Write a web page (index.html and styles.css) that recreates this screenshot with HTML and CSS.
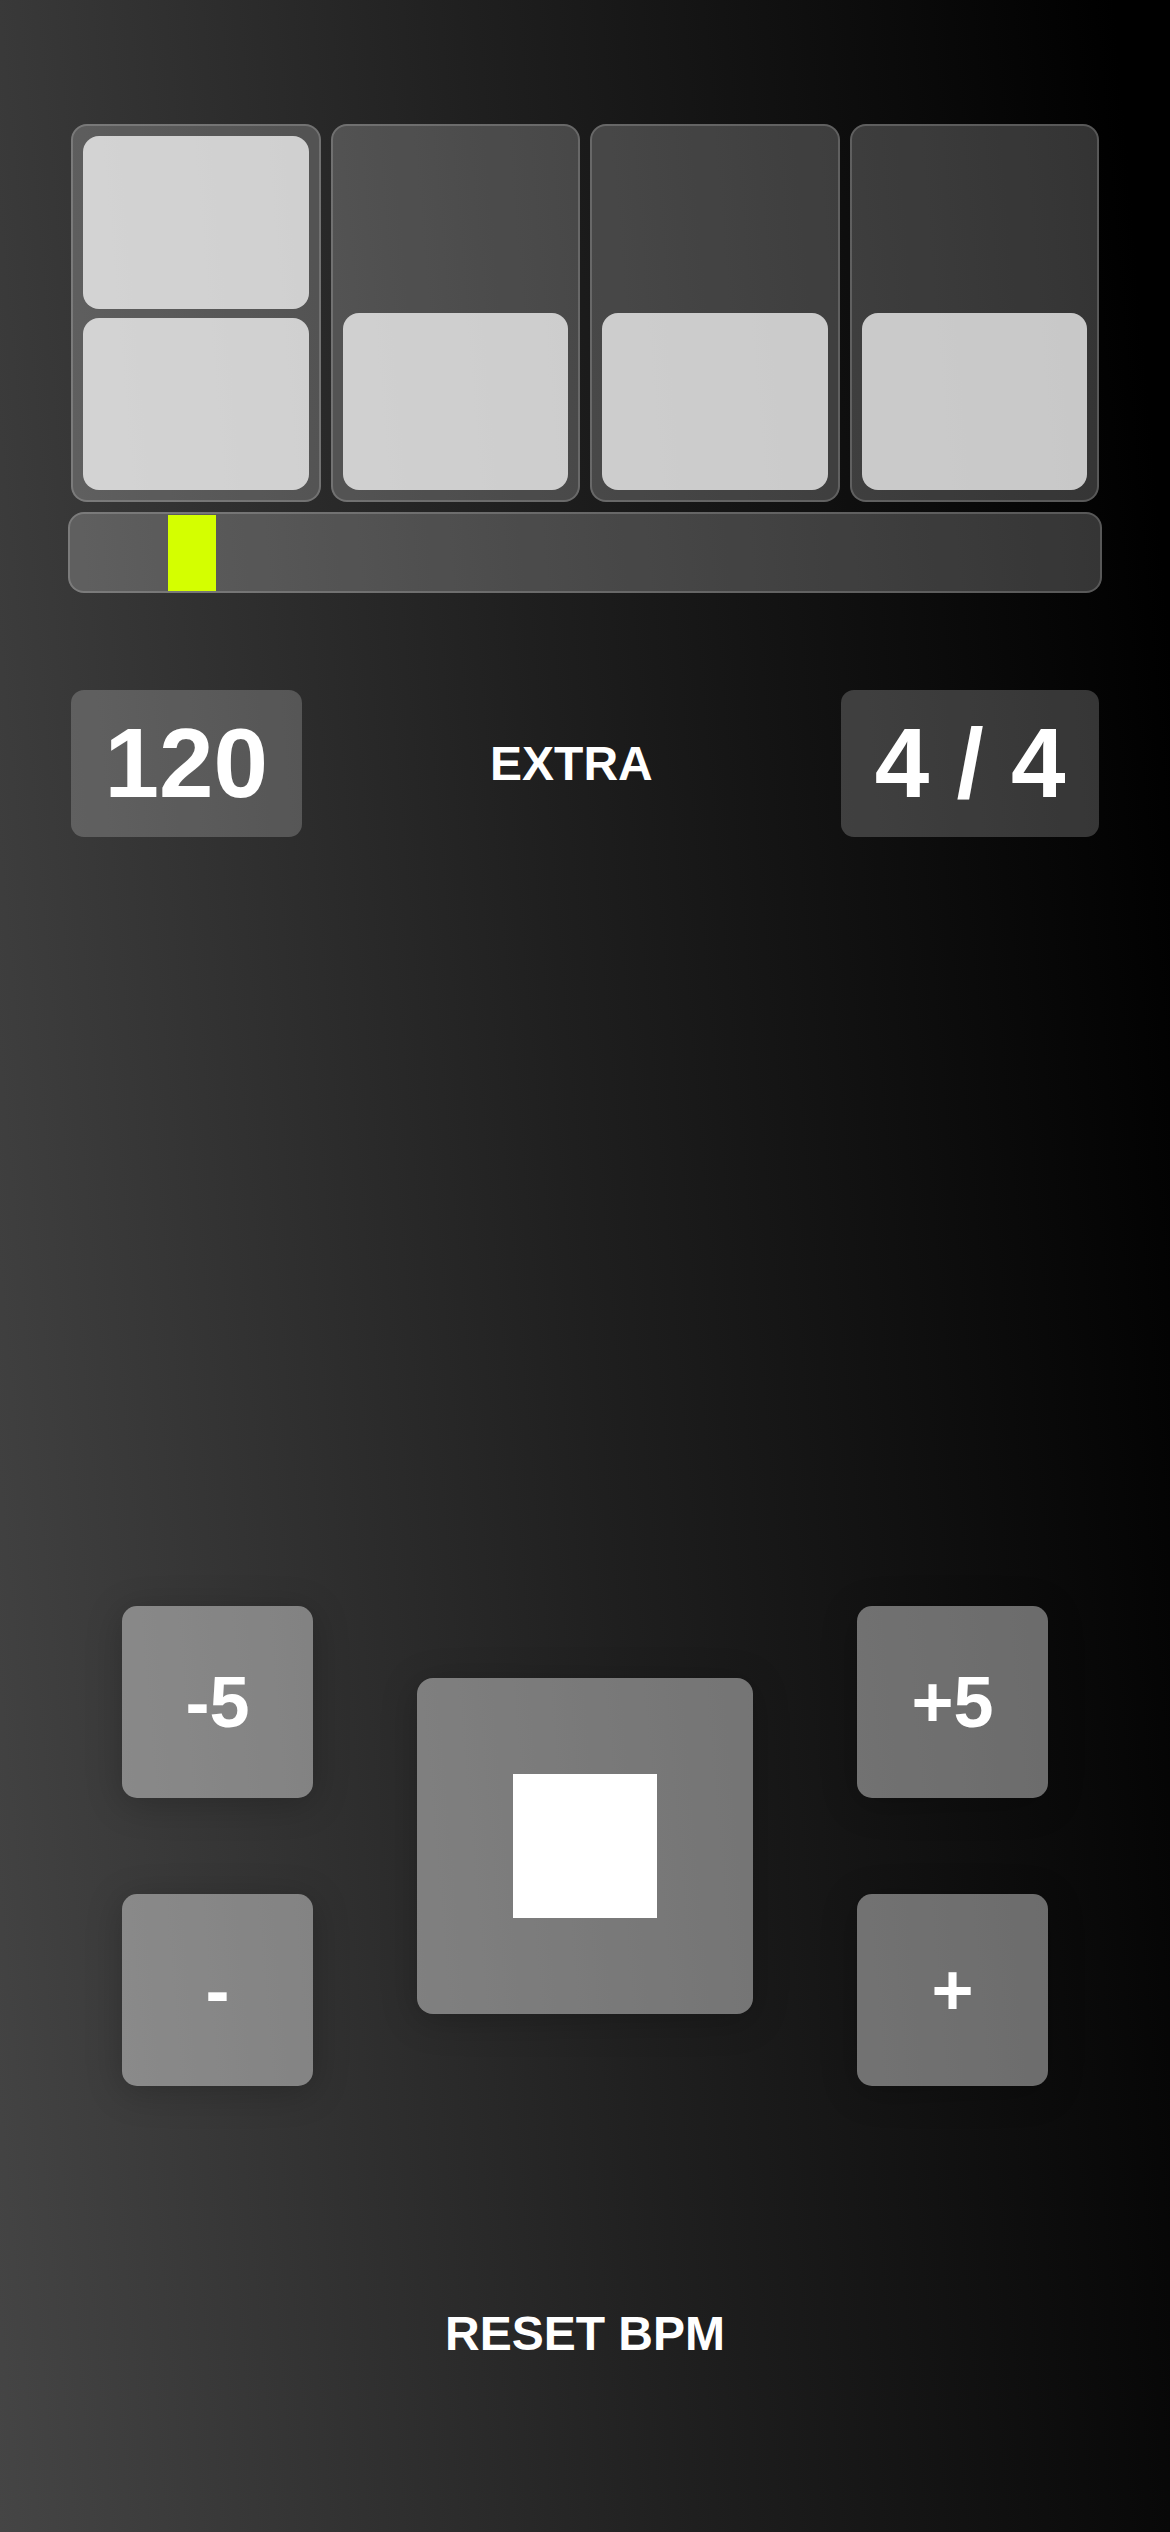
FILE: index.html
```html
<!DOCTYPE html>
<html lang="en">
<head>
<meta charset="utf-8">
<title>Metronome</title>
<link rel="stylesheet" href="styles.css">
</head>
<body>
<main class="app">
  <section class="beats">
    <div class="beat">
      <div class="sub"></div>
      <div class="sub"></div>
    </div>
    <div class="beat">
      <div class="sub"></div>
    </div>
    <div class="beat">
      <div class="sub"></div>
    </div>
    <div class="beat">
      <div class="sub"></div>
    </div>
  </section>
  <div class="track">
    <div class="playhead" style="left: 9.5%;"></div>
  </div>
  <section class="info">
    <div class="readout">120</div>
    <div class="mode">EXTRA</div>
    <div class="readout">4 / 4</div>
  </section>
  <section class="controls">
    <div class="col">
      <button class="btn">-5</button>
      <button class="btn">-</button>
    </div>
    <button class="play"><span class="stop"></span></button>
    <div class="col">
      <button class="btn">+5</button>
      <button class="btn">+</button>
    </div>
  </section>
  <div class="reset">RESET BPM</div>
</main>
</body>
</html>
```
FILE: styles.css
```css
* { box-sizing: border-box; }
html, body {
  margin: 0;
  padding: 0;
}
body {
  width: 1170px;
  height: 2532px;
  overflow: hidden;
  background: linear-gradient(85deg, #454545 0%, #1f1f1f 50%, #000 96%);
  font-family: "Liberation Sans", Arial, sans-serif;
  font-weight: 700;
  color: #fff;
}
.app {
  display: flex;
  flex-direction: column;
  padding: 124px 71px 0;
}
.beats {
  display: flex;
  gap: 10px;
  height: 378px;
}
.beat {
  flex: 1 1 0;
  display: flex;
  flex-direction: column;
  justify-content: flex-end;
  gap: 9px;
  padding: 10px;
  border: 2px solid rgba(255, 255, 255, 0.18);
  border-radius: 16px;
  background: rgba(255, 255, 255, 0.2);
}
.sub {
  flex: 0 1 50%;
  border-radius: 16px;
  background: rgba(255, 255, 255, 0.73);
}
.track {
  position: relative;
  margin: 10px -3px 0;
  height: 81px;
  border: 2px solid rgba(255, 255, 255, 0.18);
  border-radius: 16px;
  background: rgba(255, 255, 255, 0.2);
}
.playhead {
  position: absolute;
  top: 1px;
  bottom: 0;
  width: 48px;
  background: #d4ff00;
}
.info {
  margin-top: 97px;
  display: flex;
  justify-content: space-between;
  align-items: center;
}
.readout {
  padding: 17px 33.5px;
  font-size: 98px;
  line-height: 113px;
  border-radius: 13px;
  background: rgba(255, 255, 255, 0.2);
  white-space: pre;
}
.mode {
  font-size: 48px;
}
.controls {
  margin-top: 769px;
  display: flex;
  justify-content: center;
  align-items: center;
  gap: 104px;
}
.col {
  display: flex;
  flex-direction: column;
  gap: 96px;
}
.btn, .play {
  border: none;
  margin: 0;
  padding: 0;
  font-family: "Liberation Sans", Arial, sans-serif;
  font-weight: 700;
  color: #fff;
  background: rgba(255, 255, 255, 0.4);
  box-shadow: 0 6px 36px rgba(0, 0, 0, 0.22);
  display: flex;
  align-items: center;
  justify-content: center;
}
.btn {
  width: 191px;
  height: 192px;
  border-radius: 15px;
  font-size: 72px;
}
.play {
  width: 336px;
  height: 336px;
  border-radius: 16px;
}
.stop {
  width: 144px;
  height: 144px;
  background: #fff;
}
.reset {
  margin-top: 220px;
  text-align: center;
  font-size: 48px;
}
```
